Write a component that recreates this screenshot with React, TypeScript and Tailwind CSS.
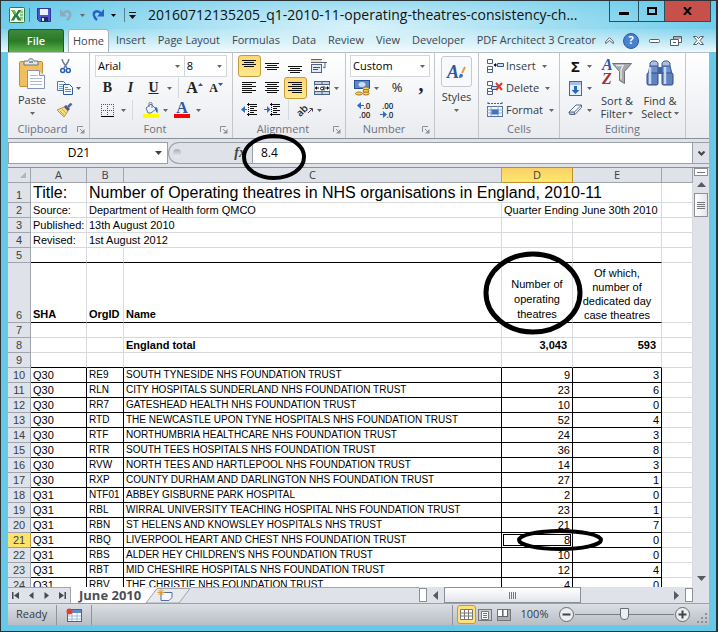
import type { ReactNode } from "react";
import clsx from "clsx";

const UI_FONT = "font-['Open_Sans','Noto_Sans',sans-serif]";
const CELL_FONT = "font-['Liberation_Sans',Arial,sans-serif]";

const TABS = [
  "Insert",
  "Page Layout",
  "Formulas",
  "Data",
  "Review",
  "View",
  "Developer",
  "PDF Architect 3 Creator",
];

type Trust = [row: number, sha: string, org: string, name: string, theatres: number, dayCase: number];

const TRUSTS: Trust[] = [
  [10, "Q30", "RE9", "SOUTH TYNESIDE NHS FOUNDATION TRUST", 9, 3],
  [11, "Q30", "RLN", "CITY HOSPITALS SUNDERLAND NHS FOUNDATION TRUST", 23, 6],
  [12, "Q30", "RR7", "GATESHEAD HEALTH NHS FOUNDATION TRUST", 10, 0],
  [13, "Q30", "RTD", "THE NEWCASTLE UPON TYNE HOSPITALS NHS FOUNDATION TRUST", 52, 4],
  [14, "Q30", "RTF", "NORTHUMBRIA HEALTHCARE NHS FOUNDATION TRUST", 24, 3],
  [15, "Q30", "RTR", "SOUTH TEES HOSPITALS NHS FOUNDATION TRUST", 36, 8],
  [16, "Q30", "RVW", "NORTH TEES AND HARTLEPOOL NHS FOUNDATION TRUST", 14, 3],
  [17, "Q30", "RXP", "COUNTY DURHAM AND DARLINGTON NHS FOUNDATION TRUST", 27, 1],
  [18, "Q31", "NTF01", "ABBEY GISBURNE PARK HOSPITAL", 2, 0],
  [19, "Q31", "RBL", "WIRRAL UNIVERSITY TEACHING HOSPITAL NHS FOUNDATION TRUST", 23, 1],
  [20, "Q31", "RBN", "ST HELENS AND KNOWSLEY HOSPITALS NHS TRUST", 21, 7],
  [21, "Q31", "RBQ", "LIVERPOOL HEART AND CHEST NHS FOUNDATION TRUST", 8, 0],
  [22, "Q31", "RBS", "ALDER HEY CHILDREN'S NHS FOUNDATION TRUST", 10, 0],
  [23, "Q31", "RBT", "MID CHESHIRE HOSPITALS NHS FOUNDATION TRUST", 12, 4],
  [24, "Q31", "RBV", "THE CHRISTIE NHS FOUNDATION TRUST", 4, 0],
];

/* ---------- shared bits ---------- */

function Arrow({ className }: { className?: string }) {
  return (
    <svg className={clsx("h-[3px] w-[5px] shrink-0", className)} viewBox="0 0 5 3" fill="#666" aria-hidden>
      <path d="M0 0h5L2.500 3z" />
    </svg>
  );
}

function Svg({ w, h, children }: { w: number; h: number; children: ReactNode }) {
  return (
    <svg width={w} height={h} viewBox={`0 0 ${w} ${h}`} className="shrink-0" fill="none" aria-hidden>
      {children}
    </svg>
  );
}

type ToolProps = { label: string; className?: string; active?: boolean; children: ReactNode };

function Tool({ label, className = "w-[23px]", active, children }: ToolProps) {
  return (
    <button
      type="button"
      aria-label={label}
      className={clsx(
        "flex h-[22px] shrink-0 items-center justify-center",
        active && "rounded-[3px] border border-[#c29b3a] bg-linear-to-b from-[#fcd774] to-[#fee78c]",
        className,
      )}
    >
      {children}
    </button>
  );
}

function DropArrow({ label, className = "w-[9px]" }: { label: string; className?: string }) {
  return (
    <button type="button" aria-label={label} className={clsx("flex h-[22px] items-center justify-center", className)}>
      <Arrow />
    </button>
  );
}

function Combo({ label, value, className }: { label: string; value: string; className: string }) {
  return (
    <span className={clsx("grid h-[22px] items-center border border-[#d4d7db] bg-white", className)}>
      <select
        aria-label={label}
        className="col-start-1 row-start-1 h-full w-full appearance-none px-0.5 text-[11px] text-black outline-none"
        defaultValue={value}
      >
        <option>{value}</option>
      </select>
      <Arrow className="pointer-events-none col-start-1 row-start-1 mr-1 justify-self-end" />
    </span>
  );
}

function Divider() {
  return <span className="mx-1 h-5 w-px bg-[#d5d8dc]" />;
}

type GroupProps = { title?: string; launcher?: boolean; className: string; children: ReactNode };

function Group({ title, launcher, className, children }: GroupProps) {
  return (
    <section className={clsx("flex shrink-0 flex-col border-r border-[#c3c7cc] pt-[2px]", className)}>
      <div className="h-[66px]">{children}</div>
      <div className="flex h-[17px] items-center text-[11px] text-[#6b7380]">
        <span className="flex-1 text-center">{title}</span>
        {launcher && (
          <button type="button" aria-label={`${title} settings`} className="mr-1">
            <Svg w={8} h={8}>
              <path d="M.5 6V.5H6M3 3l2 2" stroke="#8b9097" />
              <path d="M7.500 3v4.500H3z" fill="#8b9097" />
            </Svg>
          </button>
        )}
      </div>
    </section>
  );
}

/* ---------- icons ---------- */

function ExcelLogo() {
  return (
    <Svg w={16} h={16}>
      <rect x=".5" y=".5" width="15" height="15" rx="1" fill="#fff" stroke="#2f7d3b" />
      <path d="M11 2h3v12h-3z" fill="#cfe5c8" />
      <path d="M11 5h3M11 8h3M11 11h3" stroke="#4f9a4d" />
      <path d="M2 3h3.500l1.800 3.200L9.200 3h3L8.800 8l3.700 5.500H9L7 10l-2 3.500H1.800L5.300 8z" fill="#23813a" />
      <path d="M2 3h3.500l1.800 3.200L6.200 7.500z" fill="#7dc142" />
    </Svg>
  );
}

function SaveIcon() {
  return (
    <Svg w={14} h={14}>
      <path d="M.5.5h13v13h-11l-2-2z" fill="#4b56c4" stroke="#2c3596" />
      <path d="M3 1h8v6H3z" fill="#e9f1fb" />
      <path d="M4 9h7v4.500H4z" fill="#22286b" />
      <path d="M5 10h2v3H5z" fill="#dfe5f5" />
    </Svg>
  );
}

function UndoIcon({ redo }: { redo?: boolean }) {
  return (
    <svg className={clsx("h-[14px] w-[13px]", redo ? "" : "")} viewBox="0 0 13 14" fill="none" aria-hidden>
      {redo ? (
        <>
          <path d="M9 5.500C6 2 1 3 2 7.500c.5 2 1.500 3.500 3 4.500" stroke="#2763c5" strokeWidth="2.500" />
          <path d="M12 1v7.500H5z" fill="#2763c5" />
        </>
      ) : (
        <>
          <path d="M4 5.500C7 2 12 3 11 7.500c-.5 2-1.500 3.500-3 4.500" stroke="#8fa9bd" strokeWidth="2.500" />
          <path d="M1 1v7.500h7z" fill="#8fa9bd" />
        </>
      )}
    </svg>
  );
}

function PasteIcon() {
  return (
    <Svg w={28} h={32}>
      <rect x="1.500" y="3.500" width="23" height="25" rx="1.500" fill="#f2bf60" stroke="#c58f35" />
      <path d="M6 3h4c0-3 6-3 6 0h4v4H6z" fill="#e3e6ea" stroke="#6d747d" />
      <path d="M11 4h4" stroke="#444" />
      <path d="M9.500 12.500h12l5 5v13h-17z" fill="#fff" stroke="#8795ad" />
      <path d="M21.500 12.500v5h5" fill="#dfe6f2" stroke="#8795ad" />
      <path d="M12 17.500h8M12 20.500h12M12 23.500h12M12 26.500h12" stroke="#a9b9d6" />
    </Svg>
  );
}

function CutIcon() {
  return (
    <Svg w={11} h={15}>
      <path d="M2 0l1 3 4 6M9 0L8 3 4 9" stroke="#697d99" strokeWidth="1.500" />
      <circle cx="2.700" cy="11.500" r="2" stroke="#2a5db0" strokeWidth="1.500" />
      <circle cx="8.300" cy="11.500" r="2" stroke="#2a5db0" strokeWidth="1.500" />
    </Svg>
  );
}

function CopyIcon() {
  return (
    <Svg w={16} h={14}>
      <path d="M.5.5h6l2 2v7h-8z" fill="#f4f8fd" stroke="#4c76b5" />
      <path d="M2 3.500h4M2 5.500h4M2 7.500h4" stroke="#7fa2d5" />
      <path d="M6.500 3.500h6l3 3v7h-9z" fill="#f4f8fd" stroke="#2d5aa3" />
      <path d="M8 6.500h3M8 8.500h6M8 10.500h6" stroke="#5d87c7" />
    </Svg>
  );
}

function PainterIcon() {
  return (
    <Svg w={16} h={14}>
      <path d="M0 7l7-3 4 4-4 6z" fill="#f3dc83" stroke="#b5983f" />
      <path d="M3 8l4 4M5 6l4 4" stroke="#cdae4d" />
      <path d="M7 3.500L9 2l4 4-2 2z" fill="#574f8b" />
      <path d="M11 4l3.500-3.500" stroke="#51699f" strokeWidth="2.500" />
    </Svg>
  );
}

function BordersIcon() {
  return (
    <Svg w={13} h={13}>
      <path d="M.5 0v12M12.500 0v12M6.500 0v12M0 .5h13M0 6.500h13" stroke="#555" strokeDasharray="1 1" />
      <path d="M0 12.500h13" stroke="#000" />
    </Svg>
  );
}

function FillIcon() {
  return (
    <Svg w={16} h={16}>
      <path d="M3 6l5-4 5 5-5 4H5z" fill="#eef3fa" stroke="#5b7399" />
      <path d="M6 5V1.500c0-1.500 3-1.500 3 0V6" stroke="#5b7399" />
      <path d="M12 5c3 0 3 3 2.500 6-2-1-2-4-2.500-6z" fill="#2e68b8" />
      <path d="M0 12h16v4H0z" fill="#ff0" />
    </Svg>
  );
}

type AlignProps = { kind: "left" | "center" | "right"; offset?: number; lines?: number };

function AlignIcon({ kind, offset = 1, lines = 6 }: AlignProps) {
  return (
    <Svg w={15} h={15}>
      {Array.from({ length: lines }, (_, i) => {
        const width = i % 2 ? 10 : 14;
        const x = kind === "left" ? 0 : kind === "right" ? 14 - width : (14 - width) / 2;
        return <rect key={i} x={x} y={offset + i * 2} width={width} height="1" fill="#111" />;
      })}
    </Svg>
  );
}

function IndentIcon({ increase }: { increase?: boolean }) {
  return (
    <Svg w={17} h={14}>
      <path d="M6 1.500h10M9 3.500h7M9 5.500h4M9 7.500h7M9 9.500h4M6 11.500h10" stroke="#111" />
      <path d="M7.500 0v14" stroke="#111" strokeDasharray="1 1" />
      <path d={increase ? "M0 6h3V3l3.500 3.500L3 10V7H0z" : "M6 6H4V3L0 6.500 4 10V7h2z"} fill="#2d6ccb" />
    </Svg>
  );
}

function WrapIcon() {
  return (
    <Svg w={16} h={16}>
      <path d="M0 1.500h11M0 4.500h16" stroke="#56657e" />
      <path d="M0 3h11" stroke="#f1bd74" />
      <path d="M14 5v5l-2-1" stroke="#3f6fb3" />
      <rect x=".5" y="6.500" width="10" height="8" fill="#e2eaf6" stroke="#56657e" />
      <path d="M2 9.500h7M2 11.500h5" stroke="#44516a" />
    </Svg>
  );
}

function MergeIcon() {
  return (
    <Svg w={16} h={14}>
      <rect x=".5" y=".5" width="15" height="13" fill="#c3d5ee" stroke="#4d6184" />
      <path d="M8 0v4M8 10v4" stroke="#4d6184" />
      <path d="M0 3.500h16v7H0z" fill="#fff" stroke="#4d6184" />
      <path d="M1 7h4M11 7h4" stroke="#111" />
      <path d="M1 7l2-2v4zM15 7l-2-2v4z" fill="#111" />
      <circle cx="8" cy="7.500" r="1.500" stroke="#111" />
      <path d="M10 5v4.500" stroke="#111" />
    </Svg>
  );
}

function MoneyIcon() {
  return (
    <Svg w={16} h={16}>
      <rect x=".5" y=".5" width="15" height="8" fill="#5f88c9" stroke="#27509b" />
      <ellipse cx="8" cy="4.500" rx="3.500" ry="2.500" fill="#cbdcf4" />
      <ellipse cx="12" cy="8.500" rx="3" ry="1.500" fill="#fbd360" stroke="#a87416" />
      <ellipse cx="12" cy="11" rx="3" ry="1.500" fill="#fbd360" stroke="#a87416" />
      <ellipse cx="12" cy="13.500" rx="3" ry="1.500" fill="#fbd360" stroke="#a87416" />
      <ellipse cx="5" cy="13.500" rx="3.500" ry="1.500" fill="#fbd360" stroke="#a87416" />
    </Svg>
  );
}

function DecimalIcon({ increase }: { increase?: boolean }) {
  const arrow = (
    <Svg w={7} h={7}>
      <path d={increase ? "M7 3H4V0L0 3.500 4 7V4h3z" : "M0 3h3V0l4 3.500L3 7V4H0z"} fill="#2d6ccb" />
    </Svg>
  );
  return (
    <span className="flex flex-col text-[8px] leading-[9px] font-semibold text-[#222]">
      <span className="flex items-center justify-end">{increase ? <>{arrow}.0</> : ".00"}</span>
      <span className="flex items-center justify-end">{increase ? ".00" : <>{arrow}.0</>}</span>
    </span>
  );
}

function CellsIcon({ kind }: { kind: "insert" | "delete" | "format" }) {
  if (kind === "format") {
    return (
      <Svg w={17} h={16}>
        <path d="M1 1.500h14M1 0v3M15 0v3" stroke="#3b5fa0" strokeDasharray="2 1" />
        <rect x=".5" y="4.500" width="15" height="10" fill="#f5f8fd" stroke="#5673a6" />
        <path d="M0 8h16M0 11h16M4 4v10M11 4v10" stroke="#90a8cf" />
        <rect x="4.500" y="7.500" width="7" height="5" fill="#4673bb" />
      </Svg>
    );
  }
  return (
    <Svg w={17} h={15}>
      <path d="M.5.5h5v4h-5zM.5 7.500h5v6h-5zM.5 10.500h5" fill="#fff" stroke="#4e6485" />
      {kind === "insert" ? (
        <>
          <path d="M7 6h4" stroke="#111" />
          <path d="M6.500 6L9 4v4z" fill="#111" />
          <path d="M10.500 4.500h6v3h-6z" fill="#cfe0f5" stroke="#31579a" />
        </>
      ) : (
        <>
          <path d="M4.500 5.500h6v3h-6z" fill="#cfe0f5" stroke="#31579a" />
          <path d="M9 2l6 7M15 2L9 9" stroke="#dd3b24" strokeWidth="2" />
        </>
      )}
    </Svg>
  );
}

function FillDownIcon() {
  return (
    <Svg w={13} h={15}>
      <rect x=".5" y=".5" width="12" height="14" fill="#e8f0fb" stroke="#3a69b2" />
      <path d="M1 1h11v3H1z" fill="#a6c1e8" />
      <path d="M5 5h3v4h2.500l-4 4-4-4H5z" fill="#2566c8" />
    </Svg>
  );
}

function EraserIcon() {
  return (
    <Svg w={15} h={12}>
      <path d="M1 8l7-7h5.500v2.500L7 10.500H2z" fill="#f4f6fb" stroke="#56688b" />
      <path d="M6.500 10.500V8l7-7" stroke="#56688b" />
      <path d="M1 8h5.500v2.500H2z" fill="#b7c8e4" stroke="#56688b" />
    </Svg>
  );
}

function SortIcon() {
  return (
    <span className="grid text-left">
      <span className="col-start-1 row-start-1">
        <Svg w={30} h={28}>
          <path d="M10.500 5.500h19l-7 8v12l-5-3v-9z" fill="#a6a9ae" stroke="#6f7378" />
          <path d="M14 7.500h7l-2 5v9" stroke="#e1e3e6" strokeWidth="1.500" />
        </Svg>
      </span>
      <span className="col-start-1 row-start-1 flex flex-col font-['Liberation_Serif',serif] text-base leading-[14px] font-bold italic">
        <span className="text-[#2b57a5]">A</span>
        <span className="text-[#a3302c]">Z</span>
      </span>
    </span>
  );
}

function FindIcon() {
  return (
    <Svg w={28} h={26}>
      <path d="M4 6V3l2-2h4l2 2v3M16 6V3l2-2h4l2 2v3" fill="#aebfdd" stroke="#3f5d96" />
      <path d="M2 14l2-8h8v8M26 14l-2-8h-8v8" fill="#6e8fc8" stroke="#34538f" />
      <path d="M12 7h4v7h-4z" fill="#45649f" />
      <rect x="1" y="13" width="11" height="12" rx="1.500" fill="#5f82c1" stroke="#2f4c87" />
      <rect x="16" y="13" width="11" height="12" rx="1.500" fill="#5f82c1" stroke="#2f4c87" />
      <path d="M4 7v17M19 7v17" stroke="#c7d6f0" strokeWidth="2.500" />
    </Svg>
  );
}

function StylesIcon() {
  return (
    <span className="flex h-[31px] w-[31px] items-center justify-center rounded-[3px] border border-[#c6cad0] bg-[#f8f9fb]">
      <span className="font-['Liberation_Serif',serif] text-lg leading-none font-bold text-[#2b57a5] italic">A</span>
      <Svg w={7} h={14}>
        <path d="M6 2L3 8" stroke="#d9a33f" strokeWidth="2" />
        <path d="M0 13c0-3 1-5 3-4s1 4-3 4z" fill="#3c73c6" />
      </Svg>
    </span>
  );
}

/* ---------- title bar and tabs ---------- */

function TitleBar() {
  return (
    <header className="flex h-7 items-start pl-2 pr-[5px]">
      <div className="flex h-7 flex-1 items-center overflow-hidden">
        <ExcelLogo />
        <span className="mr-[7px] ml-1 h-3.5 w-px bg-[#5b7f90]" />
        <button type="button" aria-label="Save">
          <SaveIcon />
        </button>
        <button type="button" aria-label="Undo" className="ml-2">
          <UndoIcon />
        </button>
        <DropArrow label="Undo history" className="ml-1 w-3" />
        <button type="button" aria-label="Redo" className="ml-1">
          <UndoIcon redo />
        </button>
        <button type="button" aria-label="Redo history" className="ml-1.5">
          <Svg w={5} h={3}>
            <path d="M0 0h5L2.500 3z" fill="#000" />
          </Svg>
        </button>
        <span className="mr-1 ml-2 h-3.5 w-px bg-[#5b7f90]" />
        <button type="button" aria-label="Customize toolbar">
          <Svg w={7} h={7}>
            <path d="M0 3h7L3.500 7z" fill="#111" />
            <path d="M0 .5h7" stroke="#111" />
          </Svg>
        </button>
        <h1 className="ml-3 truncate text-sm text-[#111]">
          20160712135205_q1-2010-11-operating-theatres-consistency-ch...
        </h1>
      </div>
      <div className="flex h-[21px] shrink-0 border border-t-0 border-[#27505f]">
        <button type="button" aria-label="Minimize" className="flex w-7 items-center justify-center">
          <span className="mt-1 h-[3px] w-2.5 bg-black" />
        </button>
        <button
          type="button"
          aria-label="Maximize"
          className="flex w-[26px] items-center justify-center border-l border-[#27505f]"
        >
          <span className="h-2 w-2.5 border-2 border-black" />
        </button>
        <button
          type="button"
          aria-label="Close"
          className="flex w-[46px] items-center justify-center border-l border-[#27505f] bg-[#c7504b]"
        >
          <Svg w={10} h={8}>
            <path d="M1 0l7 8M8 0L1 8" stroke="#000" strokeWidth="2" />
          </Svg>
        </button>
      </div>
    </header>
  );
}

function TabStrip() {
  return (
    <nav aria-label="Ribbon tabs" className="flex h-[23px] items-stretch px-[7px] text-[11px] text-[#3c4650]">
      <button
        type="button"
        className="w-14 shrink-0 rounded-t-[3px] border border-b-0 border-[#1c5c1e] bg-linear-to-b from-[#3d8a3a] via-[#2a7a28] to-[#5cb548] font-semibold text-white"
      >
        File
      </button>
      <button
        type="button"
        className="ml-1 w-[41px] shrink-0 rounded-t-[3px] border border-b-0 border-[#a6b3bd] bg-white"
        aria-current="page"
      >
        Home
      </button>
      <div className="flex min-w-0 flex-1 pl-px whitespace-nowrap">
        {TABS.map((tab) => (
          <button key={tab} type="button" className="shrink-0 px-1.5">
            {tab}
          </button>
        ))}
      </div>
      <div className="flex shrink-0 items-center">
        <button type="button" aria-label="Collapse ribbon" className="flex w-5 justify-center">
          <Svg w={9} h={7}>
            <path d="M.7 4.500L4.500.7l3.800 3.800v2L4.500 3.500.7 6.500z" fill="#fff" stroke="#555d66" />
          </Svg>
        </button>
        <button
          type="button"
          aria-label="Help"
          className="mx-1 flex h-4 w-4 items-center justify-center rounded-full border border-[#2a5ba6] bg-[#4a80cf] text-[11px] font-bold text-white"
        >
          ?
        </button>
        <button type="button" aria-label="Minimize workbook" className="flex w-[22px] justify-center">
          <Svg w={11} h={4}>
            <rect x=".5" y=".5" width="10" height="3" rx="1" fill="#fff" stroke="#555d66" />
          </Svg>
        </button>
        <button type="button" aria-label="Restore workbook" className="flex w-[22px] justify-center">
          <Svg w={12} h={10}>
            <path d="M3.500.5h8v6h-8zM4 2h7" fill="#fff" stroke="#555d66" />
            <path d="M.5 3.500h8v6h-8zM3 6.500h3" fill="#fff" stroke="#555d66" />
          </Svg>
        </button>
        <button type="button" aria-label="Close workbook" className="flex w-[22px] justify-center">
          <Svg w={11} h={9}>
            <path d="M.5.5h3l2 2 2-2h3l-3.500 4 3.500 4h-3l-2-2-2 2h-3L4 4.500z" fill="#fff" stroke="#555d66" />
          </Svg>
        </button>
      </div>
    </nav>
  );
}

/* ---------- ribbon ---------- */

const SERIF = "font-['Liberation_Serif',serif] font-bold text-[#222]";

function Ribbon() {
  return (
    <div className="flex h-[87px] shrink-0 overflow-hidden border-t border-b border-t-[#b5bec6] border-b-[#8b9097] bg-linear-to-b from-white to-[#e9ebef] text-[11px] text-[#333b45]">
      <Group title="Clipboard" launcher className="w-[82px]">
        <div className="flex">
          <button type="button" className="flex w-12 flex-col items-center pt-[3px]">
            <PasteIcon />
            <span className="mt-0.5 leading-4">Paste</span>
            <Arrow className="mt-1" />
          </button>
          <div className="flex flex-col">
            <Tool label="Cut" className="w-[18px]">
              <CutIcon />
            </Tool>
            <div className="flex">
              <Tool label="Copy" className="w-[18px]">
                <CopyIcon />
              </Tool>
              <DropArrow label="Copy options" />
            </div>
            <Tool label="Format painter" className="w-[18px]">
              <PainterIcon />
            </Tool>
          </div>
        </div>
      </Group>

      <Group title="Font" launcher className="w-[143px]">
        <div className="flex px-[5px]">
          <Combo label="Font family" value="Arial" className="w-[91px]" />
          <Combo label="Font size" value="8" className="-ml-px w-11" />
        </div>
        <div className="flex items-center pl-1.5">
          <Tool label="Bold">
            <span className={clsx(SERIF, "text-sm")}>B</span>
          </Tool>
          <Tool label="Italic">
            <span className={clsx(SERIF, "text-sm italic")}>I</span>
          </Tool>
          <Tool label="Underline">
            <span className={clsx(SERIF, "text-sm underline")}>U</span>
          </Tool>
          <DropArrow label="Underline styles" />
          <Divider />
          <Tool label="Grow font">
            <span className={clsx(SERIF, "text-base")}>A</span>
            <Svg w={5} h={12}>
              <path d="M0 4h5L2.500 1z" fill="#2b57a5" />
            </Svg>
          </Tool>
          <Tool label="Shrink font" className="w-5">
            <span className={clsx(SERIF, "text-xs")}>A</span>
            <Svg w={5} h={12}>
              <path d="M0 1h5L2.500 4z" fill="#2b57a5" />
            </Svg>
          </Tool>
        </div>
        <div className="flex items-center pl-1.5">
          <Tool label="Borders">
            <BordersIcon />
          </Tool>
          <DropArrow label="Border styles" />
          <Divider />
          <Tool label="Fill colour" className="ml-1 w-5">
            <FillIcon />
          </Tool>
          <DropArrow label="Fill colours" />
          <Tool label="Font colour" className="w-6">
            <span className="flex w-4 flex-col items-center border-b-4 border-[#f00] font-['Liberation_Serif',serif] text-base leading-3 font-bold text-[#2b57a5]">
              A
            </span>
          </Tool>
          <DropArrow label="Font colours" />
        </div>
      </Group>

      <Group title="Alignment" launcher className="w-[113px]">
        <div className="flex pl-[5px]">
          <Tool label="Top align" active>
            <AlignIcon kind="center" lines={4} />
          </Tool>
          <Tool label="Middle align">
            <AlignIcon kind="center" lines={4} offset={4} />
          </Tool>
          <Tool label="Bottom align">
            <AlignIcon kind="center" lines={4} offset={7} />
          </Tool>
          <Tool label="Wrap text" className="ml-1">
            <WrapIcon />
          </Tool>
        </div>
        <div className="flex pl-[5px]">
          <Tool label="Align left">
            <AlignIcon kind="left" />
          </Tool>
          <Tool label="Align centre">
            <AlignIcon kind="center" />
          </Tool>
          <Tool label="Align right" active>
            <AlignIcon kind="right" />
          </Tool>
          <Tool label="Merge cells" className="ml-1 w-[22px]">
            <MergeIcon />
          </Tool>
          <DropArrow label="Merge options" className="w-1.5" />
        </div>
        <div className="flex items-center pl-[5px]">
          <Tool label="Decrease indent">
            <IndentIcon />
          </Tool>
          <Tool label="Increase indent">
            <IndentIcon increase />
          </Tool>
          <Divider />
          <Tool label="Orientation" className="ml-0.5 w-5">
            <span className="-rotate-45 text-[10px] font-semibold text-[#222]">ab</span>
            <Svg w={6} h={8}>
              <path d="M0 7l4-4M1.500 2.500h3v3" stroke="#444" />
            </Svg>
          </Tool>
          <DropArrow label="Orientation options" />
        </div>
      </Group>

      <Group title="Number" launcher className="w-[89px]">
        <div className="flex px-1">
          <Combo label="Number format" value="Custom" className="w-[80px]" />
        </div>
        <div className="flex items-center pl-1.5">
          <Tool label="Accounting format" className="w-5">
            <MoneyIcon />
          </Tool>
          <DropArrow label="Currencies" />
          <Tool label="Percent style" className="ml-1 w-6">
            <span className="text-[13px] text-[#222]">%</span>
          </Tool>
          <Tool label="Comma style" className="w-6">
            <span className={clsx(SERIF, "mb-2 text-xl leading-none")}>,</span>
          </Tool>
        </div>
        <div className="flex items-center pl-1.5">
          <Tool label="Increase decimal">
            <DecimalIcon increase />
          </Tool>
          <Tool label="Decrease decimal">
            <DecimalIcon />
          </Tool>
        </div>
      </Group>

      <Group className="w-11">
        <button type="button" className="flex w-full flex-col items-center pt-px">
          <StylesIcon />
          <span className="mt-0.5 leading-4">Styles</span>
          <Arrow className="mt-1" />
        </button>
      </Group>

      <Group title="Cells" className="w-[81px]">
        {(["insert", "delete", "format"] as const).map((kind) => (
          <button key={kind} type="button" className="flex h-[22px] items-center gap-0.5 pl-2 capitalize">
            <CellsIcon kind={kind} />
            <span>{kind}</span>
            <Arrow className="ml-1" />
          </button>
        ))}
      </Group>

      <Group title="Editing" className="w-[126px]">
        <div className="flex">
          <div className="flex w-8 flex-col pl-1">
            <div className="flex">
              <Tool label="Sum">
                <span className="text-[15px] font-bold text-[#111]">Σ</span>
              </Tool>
              <DropArrow label="Functions" className="w-1.5" />
            </div>
            <div className="flex">
              <Tool label="Fill">
                <FillDownIcon />
              </Tool>
              <DropArrow label="Fill options" className="w-1.5" />
            </div>
            <div className="flex">
              <Tool label="Clear">
                <EraserIcon />
              </Tool>
              <DropArrow label="Clear options" className="w-1.5" />
            </div>
          </div>
          <button type="button" className="ml-1.5 flex w-[38px] flex-col items-center pt-[3px] whitespace-nowrap">
            <SortIcon />
            <span className="mt-2 leading-[13px]">Sort &amp;</span>
            <span className="flex items-center gap-0.5 leading-[13px]">
              Filter <Arrow />
            </span>
          </button>
          <button type="button" className="ml-1 flex w-10 flex-col items-center pt-[5px] whitespace-nowrap">
            <FindIcon />
            <span className="mt-2 leading-[13px]">Find &amp;</span>
            <span className="flex items-center gap-0.5 leading-[13px]">
              Select <Arrow />
            </span>
          </button>
        </div>
      </Group>
    </div>
  );
}

/* ---------- formula bar ---------- */

function FormulaBar() {
  return (
    <div className="flex h-[29px] shrink-0 items-start border-b border-[#8b9097] bg-[#dfe2e8] pt-[3px] text-xs text-black">
      <div className="flex h-[22px] w-40 items-center border border-[#9a9fa8] bg-white">
        <input aria-label="Name box" defaultValue="D21" className="w-[140px] text-center outline-none" />
        <button type="button" aria-label="Named ranges" className="ml-1.5">
          <Svg w={7} h={4}>
            <path d="M0 0h7L3.500 4z" fill="#444" />
          </Svg>
        </button>
      </div>
      <div className="flex h-[22px] w-[84px] items-center justify-between rounded-l-full border-y border-l border-[#9a9fa8] pr-1.5 pl-1">
        <span className="h-2 w-2 rounded-full bg-linear-to-b from-[#a9adb5] to-[#eef0f3]" />
        <button
          type="button"
          aria-label="Insert function"
          className="font-['Liberation_Serif',serif] text-sm leading-none font-bold text-[#444] italic"
        >
          fx
        </button>
      </div>
      <div className="relative flex h-[22px] flex-1 border border-[#9a9fa8] bg-white">
        <input aria-label="Formula" defaultValue="8.4" className="w-full px-2 outline-none" />
        <svg
          className="pointer-events-none absolute -top-[9px] -left-3 z-20 h-[46px] w-[66px]"
          viewBox="0 0 66 46"
          fill="none"
          aria-hidden
        >
          <ellipse cx="33" cy="23" rx="30" ry="21" stroke="#000" strokeWidth="4" />
        </svg>
      </div>
      <button
        type="button"
        aria-label="Expand formula bar"
        className="flex h-[22px] w-4 items-center justify-center border-y border-[#9a9fa8]"
      >
        <Svg w={7} h={5}>
          <path d="M.5.5l3 3 3-3" stroke="#444" strokeWidth="2" />
        </Svg>
      </button>
    </div>
  );
}

/* ---------- sheet ---------- */

const HEAD = "h-[15px] border-r border-b border-[#9fa4ad] bg-[#dfe2e8] p-0 font-normal text-[#3a3f46]";
const GRID = "border-r border-b border-[#d7d9dd] p-0 px-0.5";
const LINED = "border-r border-b border-black p-0 px-0.5";

function RowHead({ n, className = "h-[15px]" }: { n: number; className?: string }) {
  return (
    <th
      scope="row"
      className={clsx(
        "border-r border-b p-0 align-bottom text-[11px] leading-[14px] font-normal text-[#3a3f46]",
        n === 21 ? "border-[#c29b3a] bg-[#fde26c]" : "border-[#9fa4ad] bg-[#dfe2e8]",
        className,
      )}
    >
      {n}
    </th>
  );
}

function EmptyRow({ n, black }: { n: number; black?: boolean }) {
  const cell = clsx("border-r border-b border-r-[#d7d9dd] p-0", black ? "border-b-black" : "border-b-[#d7d9dd]");
  return (
    <tr>
      <RowHead n={n} />
      <td className={cell} />
      <td className={cell} />
      <td className={cell} />
      <td className={cell} />
      <td className={cell} />
      <td className={GRID} />
    </tr>
  );
}

function Sheet() {
  const headCell = "border-r border-b border-r-[#d7d9dd] border-b-black p-0 px-0.5 align-bottom leading-[15px]";
  return (
    <div className={clsx("min-w-0 flex-1 overflow-hidden bg-white text-[11px] leading-[14px] text-black", CELL_FONT)}>
      <table className="w-full table-fixed border-separate border-spacing-0 whitespace-nowrap">
        <colgroup>
          <col className="w-[23px]" />
          <col className="w-14" />
          <col className="w-[37px]" />
          <col />
          <col className="w-[71px]" />
          <col className="w-[89px]" />
          <col className="w-[31px]" />
        </colgroup>
        <thead className={clsx("leading-[14px]", UI_FONT)}>
          <tr>
            <th className={HEAD} aria-label="Select all">
              <span className="flex justify-end pr-1">
                <Svg w={6} h={6}>
                  <path d="M6 0v6H0z" fill="#b0b5bd" />
                </Svg>
              </span>
            </th>
            <th className={HEAD}>A</th>
            <th className={HEAD}>B</th>
            <th className={HEAD}>C</th>
            <th className="border-r border-b border-[#c08f2c] bg-linear-to-b from-[#f9d067] to-[#ffe86c] p-0 font-normal text-[#3a3f46]">
              D
            </th>
            <th className={HEAD}>E</th>
            <th className={HEAD} />
          </tr>
        </thead>
        <tbody>
          <tr className="text-base leading-[19px]">
            <RowHead n={1} className="h-5" />
            <td className={GRID}>Title:</td>
            <td className={GRID} colSpan={4}>
              Number of Operating theatres in NHS organisations in England, 2010-11
            </td>
            <td className={GRID} />
          </tr>
          <tr>
            <RowHead n={2} />
            <td className={GRID}>Source:</td>
            <td className={GRID} colSpan={2}>
              Department of Health form QMCO
            </td>
            <td className={GRID} colSpan={2}>
              Quarter Ending June 30th 2010
            </td>
            <td className={GRID} />
          </tr>
          <tr>
            <RowHead n={3} />
            <td className={GRID}>Published:</td>
            <td className={GRID} colSpan={2}>
              13th August 2010
            </td>
            <td className={GRID} />
            <td className={GRID} />
            <td className={GRID} />
          </tr>
          <tr>
            <RowHead n={4} />
            <td className={GRID}>Revised:</td>
            <td className={GRID} colSpan={2}>
              1st August 2012
            </td>
            <td className={GRID} />
            <td className={GRID} />
            <td className={GRID} />
          </tr>
          <EmptyRow n={5} black />
          <tr className="font-bold">
            <RowHead n={6} className="h-[60px]" />
            <td className={headCell}>SHA</td>
            <td className={headCell}>OrgID</td>
            <td className={headCell}>Name</td>
            <td className={clsx(headCell, "relative text-center font-normal")}>
              Number of
              <br />
              operating
              <br />
              theatres
              <svg
                className="pointer-events-none absolute -top-[12px] -left-[19px] z-20 h-[85px] w-[101px]"
                viewBox="0 0 101 85"
                fill="none"
                aria-hidden
              >
                <ellipse cx="50" cy="42" rx="47" ry="39" stroke="#000" strokeWidth="5" />
              </svg>
            </td>
            <td className="border-r border-b border-r-[#d7d9dd] border-b-black p-0 text-center align-bottom leading-[14px] font-normal">
              Of which,
              <br />
              number of
              <br />
              dedicated day
              <br />
              case theatres
            </td>
            <td className={GRID} />
          </tr>
          <EmptyRow n={7} />
          <tr className="font-bold">
            <RowHead n={8} />
            <td className={GRID} />
            <td className={GRID} />
            <td className={GRID}>England total</td>
            <td className={clsx(GRID, "pr-[5px] text-right")}>3,043</td>
            <td className={clsx(GRID, "pr-[5px] text-right")}>593</td>
            <td className={GRID} />
          </tr>
          <EmptyRow n={9} black />
          {TRUSTS.map(([row, sha, org, name, theatres, dayCase]) => (
            <tr key={row}>
              <RowHead n={row} />
              <td className={LINED}>{sha}</td>
              <td className={clsx(LINED, "text-[10px]")}>{org}</td>
              <td className={clsx(LINED, "text-[10px]")}>{name}</td>
              <td className={clsx(LINED, "text-right", row === 21 && "relative")}>
                {theatres}
                {row === 21 && (
                  <>
                    <span className="absolute inset-px border border-black" />
                    <svg
                      className="pointer-events-none absolute -top-[5px] left-[13px] z-20 h-6 w-[90px]"
                      viewBox="0 0 90 24"
                      fill="none"
                      aria-hidden
                    >
                      <ellipse cx="45" cy="12" rx="41" ry="9" stroke="#000" strokeWidth="4" />
                    </svg>
                  </>
                )}
              </td>
              <td className={clsx(LINED, "text-right")}>{dayCase}</td>
              <td className={GRID} />
            </tr>
          ))}
        </tbody>
      </table>
    </div>
  );
}

function VerticalScroll() {
  return (
    <div className="flex w-4 shrink-0 flex-col items-center bg-[#dfe2e8]">
      <div className="flex h-2 w-3.5 items-center justify-center border border-[#8b9097] bg-white">
        <span className="h-px w-2 bg-[#777]" />
      </div>
      <button type="button" aria-label="Scroll up" className="flex h-[17px] w-full items-center justify-center">
        <Svg w={9} h={5}>
          <path d="M0 5h9L4.500 0z" fill="#555b63" />
        </Svg>
      </button>
      <div className="flex h-6 w-3.5 flex-col items-center justify-center gap-px border border-[#8b9097] bg-linear-to-r from-white to-[#e3e5ea]">
        <span className="h-px w-2 bg-[#777]" />
        <span className="h-px w-2 bg-[#777]" />
        <span className="h-px w-2 bg-[#777]" />
        <span className="h-px w-2 bg-[#777]" />
      </div>
      <div className="flex-1" />
      <button type="button" aria-label="Scroll down" className="flex h-[17px] w-full items-center justify-center">
        <Svg w={9} h={5}>
          <path d="M0 0h9L4.500 5z" fill="#555b63" />
        </Svg>
      </button>
    </div>
  );
}

const NAV_BUTTONS = [
  { label: "First sheet", d: "M0 0h1.500v7H0zM7 0v7L2 3.500z" },
  { label: "Previous sheet", d: "M5.500 0v7L1 3.500z" },
  { label: "Next sheet", d: "M1.500 0v7L6 3.500z" },
  { label: "Last sheet", d: "M0 0v7l5-3.500zM5.500 0H7v7H5.500z" },
];

function SheetTabs() {
  return (
    <div className="flex h-4 shrink-0 bg-[#dfe2e8]">
      <div className="flex w-[63px] items-center justify-around border-t border-r border-[#9fa4ad]">
        {NAV_BUTTONS.map(({ label, d }) => (
          <button key={label} type="button" aria-label={label}>
            <Svg w={7} h={7}>
              <path d={d} fill="#444a52" />
            </Svg>
          </button>
        ))}
      </div>
      <button type="button" className="bg-white pr-1 pl-2 text-[13px] leading-4 font-bold text-[#4b4f56]">
        June 2010
      </button>
      <button type="button" aria-label="Insert sheet">
        <Svg w={46} h={15}>
          <path d="M0 0h12L1 15H0z" fill="#fff" />
          <path d="M1 15L12 .5h33L34 15z" fill="#e8eaee" stroke="#9fa4ad" />
          <path d="M16 4.500h11v5l-3 3h-8z" fill="#f5f8fd" stroke="#4e6fa6" />
          <path d="M16 1v7M12.500 4.500h7M13.500 2l5 5M18.500 2l-5 5" stroke="#e39b2d" />
        </Svg>
      </button>
      <div className="flex-1 border-t border-[#9fa4ad]" />
      <span className="mt-px h-3.5 w-2 border border-[#8b9097] bg-white" />
      <button type="button" aria-label="Scroll left" className="flex w-[17px] items-center justify-center">
        <Svg w={5} h={9}>
          <path d="M5 0v9L0 4.500z" fill="#555b63" />
        </Svg>
      </button>
      <div className="flex h-full w-[137px] items-center justify-center gap-px border border-[#8b9097] bg-linear-to-b from-white to-[#e3e5ea]">
        <span className="h-[7px] w-px bg-[#777]" />
        <span className="h-[7px] w-px bg-[#777]" />
        <span className="h-[7px] w-px bg-[#777]" />
        <span className="h-[7px] w-px bg-[#777]" />
      </div>
      <div className="w-[87px]" />
      <button type="button" aria-label="Scroll right" className="flex w-[17px] items-center justify-center">
        <Svg w={5} h={9}>
          <path d="M0 0v9l5-4.500z" fill="#555b63" />
        </Svg>
      </button>
      <span className="mt-px h-3.5 w-2 border border-[#8b9097] bg-white" />
      <span className="w-4" />
    </div>
  );
}

/* ---------- status bar ---------- */

function StatusBar() {
  return (
    <footer className="flex h-[22px] shrink-0 items-center border-t border-[#9a9fa8] bg-linear-to-b from-[#dcdfe3] to-[#b9bec6] text-[11px] text-[#333b45]">
      <span className="w-12 pl-2">Ready</span>
      <span className="h-5 w-px bg-[#8f949c]" />
      <button type="button" aria-label="Record macro" className="mx-[9px]">
        <Svg w={16} h={14}>
          <rect x="1.500" y="1.500" width="14" height="12" fill="#fff" stroke="#3d64a8" />
          <path d="M2 2h13v3H2z" fill="#5e8bd0" />
          <path d="M2 8h13M2 11h13M6 5v8M11 5v8" stroke="#9fb7dd" />
          <circle cx="3.500" cy="3.500" r="3" fill="#d8452f" />
        </Svg>
      </button>
      <span className="h-5 w-px bg-[#8f949c]" />
      <div className="flex-1" />
      <span className="h-5 w-px bg-[#8f949c]" />
      <button
        type="button"
        aria-label="Normal view"
        className="ml-1 flex h-[19px] w-[19px] items-center justify-center rounded-[3px] border border-[#c29b3a] bg-[#fde27c]"
      >
        <Svg w={13} h={11}>
          <path d="M.5.5h12v10H.5zM0 4h13M0 7h13M4.500 0v11M8.500 0v11" fill="#fff" stroke="#777" />
        </Svg>
      </button>
      <button type="button" aria-label="Page layout view" className="ml-0.5">
        <Svg w={14} h={12}>
          <rect x=".5" y=".5" width="13" height="11" fill="#c9ccd2" stroke="#777" />
          <path d="M3.500 2.500h7v8h-7zM5 4.500h4M5 6.500h4M5 8.500h4" fill="#fff" stroke="#777" />
        </Svg>
      </button>
      <button type="button" aria-label="Page break preview" className="ml-[5px]">
        <Svg w={14} h={12}>
          <rect x=".5" y=".5" width="13" height="11" fill="#a9adb5" stroke="#777" />
          <path d="M1 1h4v6H1zM7 1h3v6H7z" fill="#fff" />
          <path d="M5.500 0v7M10.500 0v7M1 7.500h10" stroke="#666" />
        </Svg>
      </button>
      <button type="button" className="w-[47px] text-center">
        100%
      </button>
      <button type="button" aria-label="Zoom out">
        <Svg w={17} h={17}>
          <circle cx="8.500" cy="8.500" r="7" fill="#eceef1" stroke="#666c74" />
          <path d="M4.500 8.500h8" stroke="#444" strokeWidth="2" />
        </Svg>
      </button>
      <input
        type="range"
        aria-label="Zoom"
        min={0}
        max={200}
        defaultValue={100}
        className="h-4 w-[99px] appearance-none bg-transparent [&::-webkit-slider-runnable-track]:h-px [&::-webkit-slider-runnable-track]:bg-[#777d86] [&::-webkit-slider-thumb]:-mt-1.5 [&::-webkit-slider-thumb]:h-3 [&::-webkit-slider-thumb]:w-[9px] [&::-webkit-slider-thumb]:appearance-none [&::-webkit-slider-thumb]:rounded-b-[4px] [&::-webkit-slider-thumb]:border [&::-webkit-slider-thumb]:border-[#666c74] [&::-webkit-slider-thumb]:bg-[#eceef1]"
      />
      <button type="button" aria-label="Zoom in">
        <Svg w={17} h={17}>
          <circle cx="8.500" cy="8.500" r="7" fill="#eceef1" stroke="#666c74" />
          <path d="M4.500 8.500h8M8.500 4.500v8" stroke="#444" strokeWidth="2" />
        </Svg>
      </button>
      <span className="ml-1.5 self-end">
        <Svg w={12} h={12}>
          <path d="M8 0h2v2H8zM4 4h2v2H4zM8 4h2v2H8zM0 8h2v2H0zM4 8h2v2H4zM8 8h2v2H8z" fill="#8b9097" />
        </Svg>
      </span>
    </footer>
  );
}

export default function App() {
  return (
    <div
      className={clsx(
        "flex h-screen flex-col overflow-hidden border border-r-2 border-[#2b3238] bg-[#66c9e8]",
        UI_FONT,
      )}
    >
      <div className="flex shrink-0 flex-col bg-[radial-gradient(ellipse_55%_90%_at_50%_50%,#d9f2fa,transparent)]">
        <TitleBar />
        <div className="bg-linear-to-b from-white/10 to-white/90">
          <TabStrip />
        </div>
      </div>
      <main className="mx-[7px] mb-[6px] flex min-h-0 flex-1 flex-col">
        <Ribbon />
        <FormulaBar />
        <div className="flex min-h-0 flex-1">
          <Sheet />
          <VerticalScroll />
        </div>
        <SheetTabs />
        <StatusBar />
      </main>
    </div>
  );
}
